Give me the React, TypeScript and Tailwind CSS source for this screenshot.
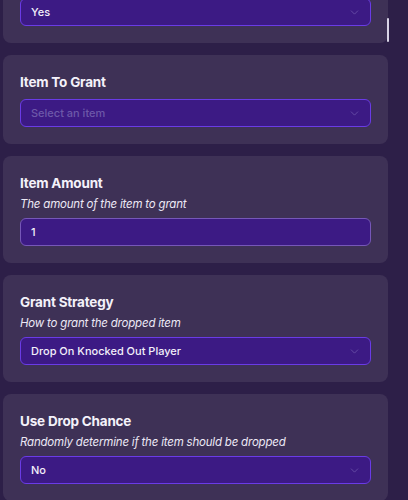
import { ChevronDown } from "lucide-react";

type Field = {
  title?: string;
  hint?: string;
  kind: "select" | "input";
  value: string;
  placeholder?: boolean;
};

const fields: Field[] = [
  { title: "Item To Grant", kind: "select", value: "Select an item", placeholder: true },
  { title: "Item Amount", hint: "The amount of the item to grant", kind: "input", value: "1" },
  { title: "Grant Strategy", hint: "How to grant the dropped item", kind: "select", value: "Drop On Knocked Out Player" },
  { title: "Use Drop Chance", hint: "Randomly determine if the item should be dropped", kind: "select", value: "No" },
];

export default function App() {
  return (
    <div
      className="relative h-[500px] w-[408px] overflow-hidden bg-[#2d1f48] text-white"
      style={{ fontFamily: "Inter, 'Noto Sans', sans-serif" }}
    >
      <div className="flex w-[388px] flex-col gap-3 pl-[3px]">
        <div className="-mt-[2px] rounded-b-lg bg-[#3e3156] px-[17px] pb-[17px]">
          <Control kind="select" value="Yes" />
        </div>
        {fields.map((field) => (
          <div key={field.value} className="rounded-lg bg-[#3e3156] px-[17px] pb-[17px] pt-[18px]">
            <p className="text-[13.5px] font-bold leading-[18px] tracking-[-0.2px] text-[#f4f1fa]">{field.title}</p>
            {field.hint && (
              <p className="mt-[4px] text-[11.5px] italic leading-[16px] tracking-[-0.2px] text-[#ece8f5]">{field.hint}</p>
            )}
            <div className={field.hint ? "mt-[6px]" : "mt-[8px]"}>
              <Control kind={field.kind} value={field.value} placeholder={field.placeholder} />
            </div>
          </div>
        ))}
      </div>

      <div className="absolute left-[387px] top-[18px] h-[24px] w-[2px] rounded-full bg-[#d9d4e6]" />
    </div>
  );
}

function Control({ kind, value, placeholder }: { kind: "select" | "input"; value: string; placeholder?: boolean }) {
  const border = kind === "select" ? "border-[#6a3be6]" : "border-[#7657b8]";

  return (
    <div className={`flex h-[28px] items-center justify-between rounded-md border ${border} bg-[#3c1a84] pl-[10px] pr-[9px]`}>
      <span className={`text-[11px] font-medium ${placeholder ? "text-[#6d58a9]" : "text-[#f3f0fa]"}`}>{value}</span>
      {kind === "select" && <ChevronDown size={13} strokeWidth={1.1} className="text-[#7d68b8]" />}
    </div>
  );
}
